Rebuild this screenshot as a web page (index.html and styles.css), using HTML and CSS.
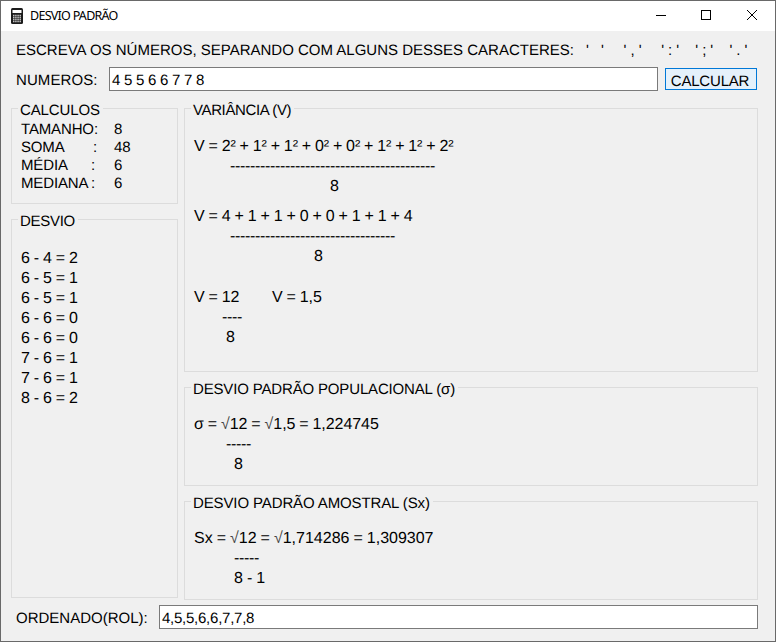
FILE: index.html
```
<!DOCTYPE html>
<html lang="pt-BR">
<head>
<meta charset="utf-8">
<title>DESVIO PADRÃO</title>
<link rel="stylesheet" href="styles.css">
</head>
<body>
<div class="window">
  <header class="titlebar">
    <svg class="app-icon" width="12" height="16" viewBox="0 0 12 16">
      <rect x="0" y="0" width="12" height="16" rx="1.5" fill="#1c1c1c"/>
      <rect x="1.5" y="2" width="9" height="3" fill="#fff"/>
      <path d="M2 7.5h8M2 9.5h8M2 11.5h8M2 13.5h8" stroke="#c4c4c4" stroke-width="1.4" stroke-dasharray="1.5 .66"/>
    </svg>
    <h1>DESVIO PADRÃO</h1>
    <svg class="controls" width="116" height="16" viewBox="0 0 116 16" fill="none" stroke="#000" stroke-width="1">
      <path d="M5 8.500h10"/>
      <rect x="50.500" y="3.500" width="9" height="9"/>
      <path d="M96 3l10 10M106 3l-10 10"/>
    </svg>
  </header>
  <main>
    <p class="hint"><span class="hint-text">ESCREVA OS NÚMEROS, SEPARANDO COM ALGUNS DESSES CARACTERES:</span><span class="seps"><span class="wide">' '</span><span class="wide">','</span><span>':'</span><span>';'</span><span>'.'</span></span></p>
    <div class="entry">
      <label class="numbers-label">NUMEROS:</label>
      <div class="field">4 5 5 6 6 7 7 8</div>
      <div class="button">CALCULAR</div>
    </div>
    <div class="panels">
      <div class="left">
        <section class="group calc">
          <h2 class="t-calc">CALCULOS</h2>
          <dl>
            <dt class="size">TAMANHO<i>:</i></dt><dd>8</dd>
            <dt>SOMA<i>:</i></dt><dd>48</dd>
            <dt class="narrow">MÉDIA<i>:</i></dt><dd>6</dd>
            <dt class="narrow">MEDIANA<i>:</i></dt><dd>6</dd>
          </dl>
        </section>
        <section class="group dev">
          <h2 class="t-dev">DESVIO</h2>
          <div class="math">
            <p>6 - 4 = 2</p>
            <p>6 - 5 = 1</p>
            <p>6 - 5 = 1</p>
            <p>6 - 6 = 0</p>
            <p>6 - 6 = 0</p>
            <p>7 - 6 = 1</p>
            <p>7 - 6 = 1</p>
            <p>8 - 6 = 2</p>
          </div>
        </section>
      </div>
      <div class="right">
        <section class="group var">
          <h2 class="t-var">VARIÂNCIA (V)</h2>
          <div class="math">
            <p class="squares">V = 2² + 1² + 1² + 0² + 0² + 1² + 1² + 2²</p>
            <p class="bar">-----------------------------------------</p>
            <p class="den-a">8</p>
          </div>
          <div class="math second">
            <p>V = 4 + 1 + 1 + 0 + 0 + 1 + 1 + 4</p>
            <p class="bar">---------------------------------</p>
            <p class="den-b">8</p>
          </div>
          <div class="math third">
            <p><span class="quotient">V = 12</span><span>V = 1,5</span></p>
            <p class="bar bar-c">----</p>
            <p class="den-c">8</p>
          </div>
        </section>
        <section class="group small">
          <h2 class="t-pop">DESVIO PADRÃO POPULACIONAL (σ)</h2>
          <div class="math">
            <p>σ = <b>√</b>12 = <b>√</b>1,5 = 1,224745</p>
            <p class="bar bar-d">-----</p>
            <p class="den-d">8</p>
          </div>
        </section>
        <section class="group small">
          <h2 class="t-am">DESVIO PADRÃO AMOSTRAL (Sx)</h2>
          <div class="math roomy">
            <p>Sx = <b>√</b>12 = <b>√</b>1,714286 = 1,309307</p>
            <p class="bar bar-e">-----</p>
            <p class="den-d">8 - 1</p>
          </div>
        </section>
      </div>
    </div>
    <div class="sorted">
      <label class="sorted-label">ORDENADO(ROL):</label>
      <div class="field sorted-field">4,5,5,6,6,7,7,8</div>
    </div>
  </main>
</div>
</body>
</html>
```
FILE: styles.css
```
* { box-sizing: border-box; margin: 0; padding: 0; }
body {
  font: 15px/20px "Liberation Sans", Arial, sans-serif;
  color: #000;
  text-rendering: geometricPrecision;
}
.window {
  width: 776px;
  height: 642px;
  border: 1px solid #696969;
  background: #f0f0f0;
  overflow: hidden;
}
.titlebar {
  display: flex;
  align-items: center;
  height: 30px;
  padding: 0 8px 0 10px;
  background: #fff;
}
.titlebar h1 {
  flex: 1;
  margin-left: 7px;
  font: 400 12.5px/16px "Noto Sans", sans-serif;
  letter-spacing: -0.72px;
}
.controls { margin-top: -2px; }
h2, b, i { font-weight: 400; font-style: normal; }
b { color: #444; }
p, dt, dd, h2, label, .field, .button { white-space: pre; }
main { padding: 10px 17px 0 10px; }
.hint { display: flex; height: 20px; padding-left: 5px; }
.hint-text { width: 570px; }
.seps { display: flex; gap: 12.2px; letter-spacing: 4px; }
.seps .wide { margin-right: 3.5px; }
.entry { display: flex; height: 24px; margin-top: 6px; padding-left: 5px; }
.entry label { width: 93px; line-height: 27px; letter-spacing: 0.1px; }
.field {
  width: 549px;
  height: 24px;
  padding-left: 2px;
  border: 1px solid #7a7a7a;
  background: #fff;
  line-height: 25px;
  letter-spacing: -0.25px;
}
.button {
  width: 92px;
  height: 22px;
  margin: 1px 0 0 7px;
  padding-right: 2px;
  border: 1px solid #0078d7;
  background: #e5f1fb;
  line-height: 25px;
  text-align: center;
  letter-spacing: -0.2px;
}
.panels { display: flex; gap: 6px; margin-top: 17px; }
.left { width: 167px; }
.right { width: 574px; }
.group { border: 1px solid #dcdcdc; }
.group h2 {
  width: fit-content;
  height: 20px;
  margin: -9px 0 0 6px;
  padding: 0 3px 0 2px;
  background: #f0f0f0;
  font-size: 15px;
  line-height: 21px;
  letter-spacing: -0.12px;
}
.group .t-dev { letter-spacing: -0.3px; }
.group .t-var { letter-spacing: -0.38px; }
.group .t-pop { letter-spacing: -0.16px; }
.calc { height: 96px; }
.dev { height: 379px; margin-top: 15px; }
dl { display: grid; grid-template-columns: 93px 1fr; padding: 1px 0 0 9px; line-height: 18px; }
dt { display: flex; justify-content: space-between; padding-right: 17px; letter-spacing: -0.15px; }
.size { padding-right: 16px; }
.narrow { padding-right: 19px; }
.var { height: 264px; }
.small { height: 99px; margin-top: 15px; }
.math { padding: 17px 0 0 9px; font-size: 16px; word-spacing: -0.45px; letter-spacing: -0.06px; }
.small .math { padding-top: 16px; }
.dev .math { padding-top: 18px; }
.small .roomy { letter-spacing: 0; }
.squares { letter-spacing: -0.09px; }
.second { padding-top: 10px; }
.third { padding-top: 21px; }
.math .bar { padding-left: 36px; letter-spacing: -0.33px; }
.math .bar-c { padding-left: 28px; }
.math .bar-d { padding-left: 32px; }
.math .bar-e { padding-left: 40px; }
.den-a { padding-left: 136px; }
.den-b { padding-left: 120px; }
.den-c { padding-left: 32px; }
.den-d { padding-left: 40px; }
.quotient { display: inline-block; width: 78px; }
.sorted { display: flex; margin-top: 5px; padding-left: 5px; }
.sorted-label { width: 143px; line-height: 27px; }
.sorted-field { width: 599px; }
```
